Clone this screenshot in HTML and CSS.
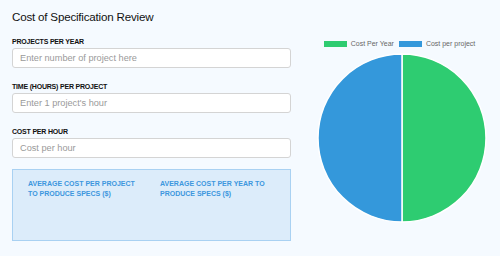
FILE: index.html
```html
<!DOCTYPE html>
<html lang="en">
<head>
    <meta charset="UTF-8">
    <meta name="viewport" content="width=device-width, initial-scale=1.0">
    <title>Cost of Specification Review</title>

    <link rel="stylesheet" href="styles.css">

</head>
<body>
    <div class="container">
        <div class="calc">
            <h1 class="title">Cost of Specification Review</h1>

            <label class="label" for="projects">PROJECTS PER YEAR</label>
            <input class="field" type="text" id="projects" placeholder="Enter number of project here">

            <label class="label" for="hours">TIME (HOURS) PER PROJECT</label>
            <input class="field" type="text" id="hours" placeholder="Enter 1 project's hour">

            <label class="label" for="cost">COST PER HOUR</label>
            <input class="field" type="text" id="cost" placeholder="Cost per hour">

            <div class="resultBox">
                <div class="resultItem">AVERAGE COST PER PROJECT TO PRODUCE SPECS ($)</div>
                <div class="resultItem">AVERAGE COST PER YEAR TO PRODUCE SPECS ($)</div>
            </div>
        </div>

        <div class="chart">
            <div class="legend">
                <span class="box green"></span><span class="legendText">Cost Per Year</span>
                <span class="box blue"></span><span class="legendText">Cost per project</span>
            </div>
            <svg class="pie" width="172" height="172" viewBox="0 0 172 172">
                <path d="M86,2 A84,84 0 0 1 86,170 Z" fill="#2ecc71" stroke="#fff" stroke-width="1.5"/>
                <path d="M86,170 A84,84 0 0 1 86,2 Z" fill="#3498db" stroke="#fff" stroke-width="1.5"/>
            </svg>
        </div>
    </div>
</body>
</html>
```

FILE: styles.css
```css
body{
    margin: 0;
    background-color: #f5faff;
    font-family: "Liberation Sans", Arial, sans-serif;
    color: #111;
}
.container{
    display: flex;
    padding-top: 9px;
}
.calc{
    width: 279px;
    margin-left: 12px;
    display: flex;
    flex-direction: column;
}
.title{
    margin: 0 0 12px;
    font-size: 11.6px;
    line-height: 16px;
    font-weight: normal;
    letter-spacing: -0.2px;
}
.label{
    font-size: 7px;
    line-height: 9px;
    font-weight: bold;
    letter-spacing: -0.2px;
    margin-bottom: 2px;
}
.field{
    box-sizing: border-box;
    height: 20px;
    margin: 0 0 14px;
    padding: 0 7px;
    border: 1px solid #d4d4d4;
    border-radius: 3px;
    background-color: #fff;
    font-family: inherit;
    font-size: 9.2px;
}
.field::placeholder{
    color: #9a9a9a;
}
.resultBox{
    box-sizing: border-box;
    height: 72px;
    margin-top: -3px;
    padding: 9px 15px;
    display: grid;
    grid-template-columns: 112px 112px;
    column-gap: 20px;
    align-items: start;
    background-color: #dcecfa;
    border: 1px solid #a9d1f2;
}
.resultItem{
    font-size: 7px;
    line-height: 10px;
    font-weight: bold;
    color: #3d97de;
}
.chart{
    flex: 1;
    margin-left: 13px;
    padding-top: 31px;
    display: flex;
    flex-direction: column;
    align-items: center;
}
.legend{
    display: flex;
    align-items: center;
    height: 7px;
    font-size: 7px;
    color: #666;
}
.box{
    width: 23px;
    height: 6px;
    margin-right: 4px;
}
.green{
    background-color: #2ecc71;
}
.blue{
    background-color: #3498db;
}
.legendText{
    margin-right: 5px;
}
.pie{
    margin-top: 5px;
}
```
